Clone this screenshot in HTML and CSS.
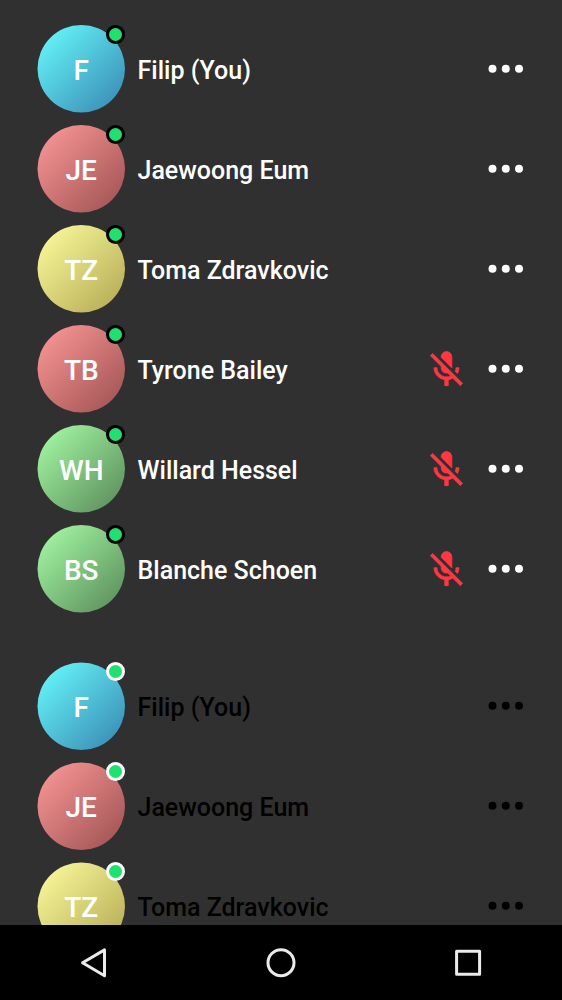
FILE: index.html
```
<!DOCTYPE html>
<html lang="en">
<head>
<meta charset="utf-8">
<title>Participants</title>
<link rel="stylesheet" href="styles.css">
</head>
<body>
<svg class="sprite" aria-hidden="true">
  <symbol id="mic-off" viewBox="0 0 24 24"><path d="M19 11h-1.7c0 .74-.16 1.43-.43 2.05l1.23 1.23c.56-.98.9-2.09.9-3.28zm-4.02.17c0-.06.02-.11.02-.17V5c0-1.66-1.34-3-3-3S9 3.34 9 5v.18l5.98 5.99zM4.27 3L3 4.27l6.01 6.01V11c0 1.66 1.33 3 2.99 3 .22 0 .44-.03.65-.08l1.66 1.66c-.71.33-1.5.52-2.31.52-2.76 0-5.3-2.1-5.3-5.1H5c0 3.41 2.72 6.23 6 6.72V21h2v-3.28c.91-.13 1.77-.45 2.54-.9L19.73 21 21 19.73 4.27 3z"/></symbol>
  <symbol id="more" viewBox="0 0 36 10"><circle cx="4.5" cy="4.8" r="4"/><circle cx="17.8" cy="4.8" r="4"/><circle cx="31" cy="4.8" r="4"/></symbol>
</svg>
<main class="screen">
  <ul class="list dark">
    <li class="row"><div class="avatar blue">F<i class="status"></i></div><span class="name">Filip (You)</span><svg class="more"><use href="#more"/></svg></li>
    <li class="row"><div class="avatar red">JE<i class="status"></i></div><span class="name">Jaewoong Eum</span><svg class="more"><use href="#more"/></svg></li>
    <li class="row"><div class="avatar yellow">TZ<i class="status"></i></div><span class="name">Toma Zdravkovic</span><svg class="more"><use href="#more"/></svg></li>
    <li class="row"><div class="avatar red">TB<i class="status"></i></div><span class="name">Tyrone Bailey</span><svg class="mic"><use href="#mic-off"/></svg><svg class="more"><use href="#more"/></svg></li>
    <li class="row"><div class="avatar green">WH<i class="status"></i></div><span class="name">Willard Hessel</span><svg class="mic"><use href="#mic-off"/></svg><svg class="more"><use href="#more"/></svg></li>
    <li class="row"><div class="avatar green">BS<i class="status"></i></div><span class="name">Blanche Schoen</span><svg class="mic"><use href="#mic-off"/></svg><svg class="more"><use href="#more"/></svg></li>
  </ul>
  <ul class="list light">
    <li class="row"><div class="avatar blue">F<i class="status"></i></div><span class="name">Filip (You)</span><svg class="more"><use href="#more"/></svg></li>
    <li class="row"><div class="avatar red">JE<i class="status"></i></div><span class="name">Jaewoong Eum</span><svg class="more"><use href="#more"/></svg></li>
    <li class="row"><div class="avatar yellow">TZ<i class="status"></i></div><span class="name">Toma Zdravkovic</span><svg class="more"><use href="#more"/></svg></li>
  </ul>
</main>
<nav class="navbar">
  <svg class="nav-icon" viewBox="0 0 36 36"><path d="M28.5 4.9v25.8L6.6 17.8z"/></svg>
  <svg class="nav-icon" viewBox="0 0 36 36"><circle cx="18" cy="17.7" r="13"/></svg>
  <svg class="nav-icon" viewBox="0 0 36 36"><rect x="6.6" y="6.2" width="23" height="23"/></svg>
</nav>
</body>
</html>
```
FILE: styles.css
```
* { box-sizing: border-box; }
body {
  margin: 0;
  height: 1000px;
  display: flex;
  flex-direction: column;
  overflow: hidden;
  background: #303030;
  font-family: Roboto, sans-serif;
  font-weight: 500;
}
.sprite { display: none; }
.screen {
  height: 925px;
  flex: none;
  overflow: hidden;
  padding: 19px 37.5px 0 37px;
  display: flex;
  flex-direction: column;
  gap: 37px;
}
.list { list-style: none; margin: 0; padding: 0; flex: none; }
.dark { color: #fff; --circle-y: 43.75px; }
.light { color: #000; --circle-y: 44.25px; }
.row { height: 100px; display: flex; align-items: center; }
.avatar {
  position: relative;
  z-index: 0;
  width: 88px;
  height: 88px;
  display: flex;
  align-items: center;
  justify-content: center;
  color: #fff;
  font-size: 28px;
  line-height: 33px;
  padding: 3px 0 0 .5px;
}
.avatar::before {
  content: "";
  position: absolute;
  inset: 0;
  z-index: -1;
  background: var(--fill);
  clip-path: circle(43.75px at 44.25px var(--circle-y));
}
.blue { --fill: linear-gradient(135deg, #69ffff 0%, #3784b0 100%); }
.red { --fill: linear-gradient(135deg, #ff9a9a 0%, #9b4f4f 100%); }
.yellow { --fill: linear-gradient(135deg, #ffffa0 0%, #b0a650 100%); }
.green { --fill: linear-gradient(135deg, #a8ffa8 0%, #578757 100%); }
.status {
  position: absolute;
  top: 0;
  right: 0;
  width: 19px;
  height: 19px;
  border-radius: 50%;
  border: 3px solid #000;
  background: #20e070;
}
.light .status { border-color: #fff; }
.name { flex: 1; margin-left: 12.5px; padding-top: 4px; font-size: 25px; line-height: 30px; }
.mic {
  width: 43px;
  height: 43px;
  margin: 1px 20px 0 0;
  fill: #ff3742;
  stroke: #ff3742;
  stroke-width: .4;
}
.more { width: 36px; height: 10px; margin-right: 1px; fill: currentColor; }
.navbar {
  height: 75px;
  flex: none;
  background: #000;
  display: flex;
  align-items: center;
  justify-content: space-between;
  padding: 0 76px;
}
.nav-icon { width: 36px; height: 36px; fill: none; stroke: #ebebeb; stroke-width: 3; stroke-linejoin: round; }
```
